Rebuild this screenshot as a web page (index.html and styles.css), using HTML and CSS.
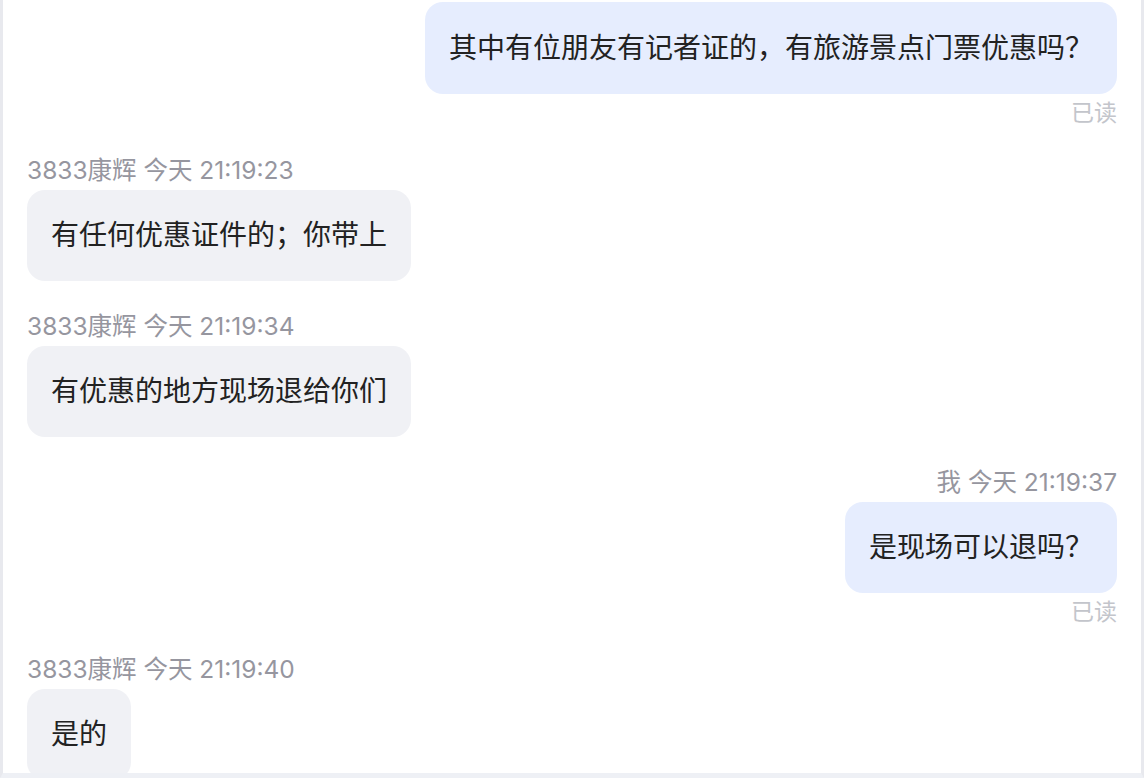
FILE: index.html
```html
<!DOCTYPE html>
<html lang="zh-CN">
<head>
<meta charset="utf-8">
<title>聊天记录</title>
<link rel="stylesheet" href="styles.css">
</head>
<body>
<div class="chat">
  <div class="group mine first">
    <div class="bubble">其中有位朋友有记者证的，有旅游景点门票优惠吗？</div>
    <div class="read">已读</div>
  </div>
  <div class="group">
    <div class="meta">3833康辉 今天 21:19:23</div>
    <div class="bubble">有任何优惠证件的；你带上</div>
  </div>
  <div class="group">
    <div class="meta">3833康辉 今天 21:19:34</div>
    <div class="bubble">有优惠的地方现场退给你们</div>
  </div>
  <div class="group mine">
    <div class="meta">我 今天 21:19:37</div>
    <div class="bubble">是现场可以退吗？</div>
    <div class="read">已读</div>
  </div>
  <div class="group">
    <div class="meta">3833康辉 今天 21:19:40</div>
    <div class="bubble">是的</div>
  </div>
</div>
</body>
</html>
```

FILE: styles.css
```css
html, body {
  margin: 0;
  padding: 0;
  background: #ffffff;
  overflow: hidden;
}

.chat {
  box-sizing: border-box;
  width: 1144px;
  height: 778px;
  overflow: hidden;
  border-left: 3px solid #e8e9ee;
  border-right: 3px solid #e8e9ee;
  border-bottom: 5px solid #eef0f5;
  padding: 2px 24px 0 24px;
  display: flex;
  flex-direction: column;
  font-family: "Inter", "Noto Sans CJK SC", sans-serif;
}

.group {
  display: flex;
  flex-direction: column;
  align-items: flex-start;
  margin-top: 30px;
  flex-shrink: 0;
}

.group.first {
  margin-top: 0;
}

.group.mine {
  align-items: flex-end;
}

.meta {
  font-size: 24.5px;
  line-height: 30px;
  color: #96969f;
  margin-bottom: 5px;
  white-space: nowrap;
}

.bubble {
  background: #f0f1f5;
  color: #222222;
  font-size: 28px;
  line-height: 33px;
  padding: 29px 24px;
  border-radius: 18px;
  white-space: nowrap;
  flex-shrink: 0;
}

.mine .bubble {
  background: #e6edfe;
}

.first .bubble {
  padding-top: 30px;
}

.read {
  font-size: 23px;
  line-height: 24px;
  margin-top: 7px;
  color: #c3c5cb;
}
```
